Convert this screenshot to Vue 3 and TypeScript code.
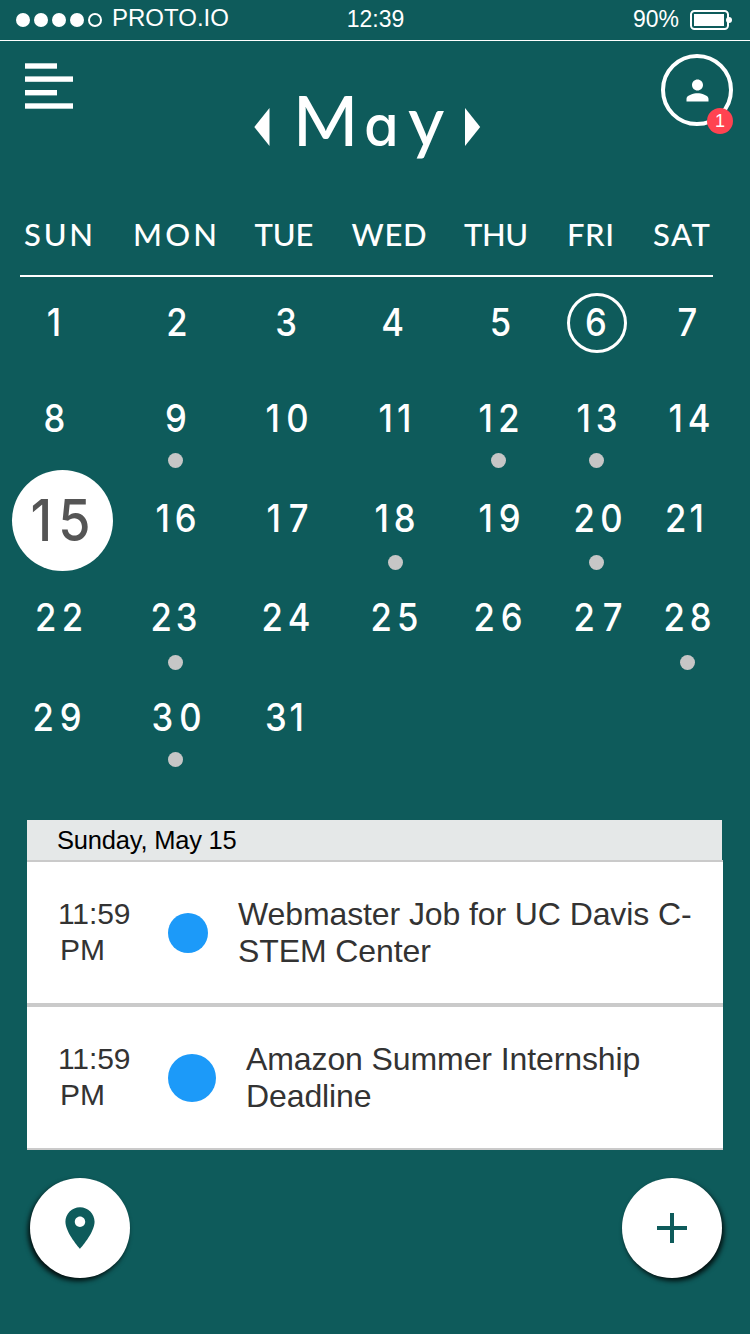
<script setup lang="ts">
interface Column { label: string; width: number; center: number; ink: number }
interface Day { n: number; x: number; w: number; dot?: boolean }
interface Week { height: number; baseline: number; dotY: number; days: Day[] }
interface Entry { title: string; size: number }

const columns: Column[] = [
  { label: 'SUN', width: 116, center: 58.5, ink: 66 },
  { label: 'MON', width: 118, center: 175, ink: 81 },
  { label: 'TUE', width: 106, center: 284, ink: 56 },
  { label: 'WED', width: 110, center: 389, ink: 72 },
  { label: 'THU', width: 96, center: 496, ink: 61 },
  { label: 'FRI', width: 102, center: 590.5, ink: 44 },
  { label: 'SAT', width: 102, center: 681.5, ink: 54 }
]
const starts = columns.map((_, i) => columns.slice(0, i).reduce((sum, c) => sum + c.width, 0))

const weeks: Week[] = [
  { height: 93, baseline: 59, dotY: 0, days: [
    { n: 1, x: 54, w: 12 }, { n: 2, x: 177, w: 19 }, { n: 3, x: 286, w: 18 }, { n: 4, x: 392.5, w: 20 },
    { n: 5, x: 500.5, w: 19 }, { n: 6, x: 596, w: 18 }, { n: 7, x: 687.5, w: 20 }] },
  { height: 100, baseline: 62, dotY: 90.5, days: [
    { n: 8, x: 54.5, w: 17 }, { n: 9, x: 176, w: 18, dot: true }, { n: 10, x: 287, w: 40 }, { n: 11, x: 395, w: 30 },
    { n: 12, x: 499, w: 38, dot: true }, { n: 13, x: 597, w: 38, dot: true }, { n: 14, x: 689.5, w: 39 }] },
  { height: 101, baseline: 62, dotY: 92.5, days: [
    { n: 15, x: 60.5, w: 57 }, { n: 16, x: 176, w: 38 }, { n: 17, x: 287.5, w: 39 }, { n: 18, x: 395, w: 38, dot: true },
    { n: 19, x: 499.5, w: 39 }, { n: 20, x: 598, w: 46, dot: true }, { n: 21, x: 684.5, w: 36 }] },
  { height: 99, baseline: 60, dotY: 91.5, days: [
    { n: 22, x: 59, w: 45 }, { n: 23, x: 174, w: 44, dot: true }, { n: 24, x: 286, w: 46 }, { n: 25, x: 394.5, w: 45 },
    { n: 26, x: 498, w: 46 }, { n: 27, x: 598, w: 46 }, { n: 28, x: 687.5, w: 45, dot: true }] },
  { height: 110, baseline: 61, dotY: 89.5, days: [
    { n: 29, x: 57, w: 46 }, { n: 30, x: 176.5, w: 47, dot: true }, { n: 31, x: 284.5, w: 36 }] }
]

const dotCenters = [58, 175.5, 287, 395.5, 498.5, 596.5, 687.5]
const narrow = 0.9
const entries: Entry[] = [
  { title: 'Webmaster Job for UC Davis C-STEM Center', size: 40 },
  { title: 'Amazon Summer Internship Deadline', size: 48 }
]
</script>

<template>
  <main class="screen">
    <header class="status">
      <div class="carrier">
        <svg width="90" height="16" viewBox="0 0 90 16">
          <circle v-for="i in 4" :key="i" :cx="i * 18 - 10" cy="8" r="7" fill="#fff" />
          <circle cx="80" cy="8" r="6" fill="none" stroke="#fff" stroke-width="2" />
        </svg>
        <span class="carrier-name">PROTO.IO</span>
      </div>
      <span class="clock">12:39</span>
      <div class="power">
        <span>90%</span>
        <svg width="44" height="22" viewBox="0 0 44 22">
          <rect x="2" y="2" width="37" height="18" rx="3.5" fill="none" stroke="#fff" stroke-width="2" />
          <rect x="5" y="5" width="30" height="12" fill="#fff" />
          <ellipse cx="40" cy="11" rx="3" ry="3" fill="#fff" />
        </svg>
      </div>
    </header>

    <section class="top">
      <svg class="menu" width="48" height="46" viewBox="0 0 48 46" fill="#fff">
        <rect x="0" y="0.3" width="32" height="5.4" />
        <rect x="0" y="13.4" width="48" height="5.4" />
        <rect x="0" y="27" width="32" height="5.4" />
        <rect x="0" y="40.3" width="48" height="5.4" />
      </svg>
      <div class="month">
        <svg width="16" height="38" viewBox="0 0 16 38"><path d="M15.5 0V38L0.3 19Z" fill="#fff" /></svg>
        <svg class="month-name" width="167" height="90" viewBox="0 0 167 90">
          <text y="64"><tspan x="9" class="cap">M</tspan><tspan x="80" class="round">a</tspan><tspan x="124" class="cap">y</tspan></text>
        </svg>
        <svg width="16" height="38" viewBox="0 0 16 38"><path d="M0 0V38L15.2 19Z" fill="#fff" /></svg>
      </div>
      <div class="avatar">
        <svg width="33" height="33" viewBox="0 0 24 24" fill="#fff">
          <path d="M12 12c2.210 0 4-1.790 4-4s-1.790-4-4-4-4 1.790-4 4 1.790 4 4 4zm0 2c-2.670 0-8 1.340-8 4v2h16v-2c0-2.660-5.330-4-8-4z" />
        </svg>
        <span class="badge">1</span>
      </div>
    </section>

    <section class="calendar">
      <div class="weekdays">
        <svg v-for="(c, i) in columns" :key="c.label" :width="c.width" height="60">
          <text class="weekday" :x="c.center - starts[i]" y="30.500" text-anchor="middle" :textLength="c.ink + 3" lengthAdjust="spacing">{{ c.label }}</text>
        </svg>
      </div>
      <div class="rule"></div>
      <div v-for="(week, wi) in weeks" :key="wi" class="week">
        <svg v-for="(d, i) in week.days" :key="d.n" :width="columns[i].width" :height="week.height">
          <circle v-if="d.n === 15" cx="62.5" cy="50.5" r="50.5" fill="#fff" />
          <circle v-if="d.n === 6" :cx="597 - starts[i]" cy="46" r="28.500" fill="none" stroke="#fff" stroke-width="3" />
          <g :transform="`translate(${d.x - starts[i]} ${d.n === 15 ? 71 : week.baseline}) scale(${narrow} 1)`">
            <text v-if="d.n < 10" class="number" text-anchor="middle">{{ d.n }}</text>
            <text v-else :class="d.n === 15 ? 'today' : 'number'" text-anchor="middle" :textLength="(d.w + 3) / narrow" lengthAdjust="spacing">{{ d.n }}</text>
          </g>
          <circle v-if="d.dot" :cx="dotCenters[i] - starts[i]" :cy="week.dotY" r="7.500" fill="#c6c6c6" />
        </svg>
      </div>
    </section>

    <section class="agenda">
      <h2>Sunday, May 15</h2>
      <article v-for="e in entries" :key="e.title">
        <div class="time">11:59<br /><span>PM</span></div>
        <svg :width="e.size" :height="e.size"><circle :cx="e.size / 2" :cy="e.size / 2" :r="e.size / 2" fill="#1c9af9" /></svg>
        <p>{{ e.title }}</p>
      </article>
    </section>

    <footer class="actions">
      <button class="fab place" aria-label="Places">
        <svg width="50" height="50" viewBox="0 0 24 24" fill="#0e5b5b">
          <path d="M12 2C8.130 2 5 5.130 5 9c0 5.250 7 13 7 13s7-7.750 7-13c0-3.870-3.130-7-7-7zm0 9.500c-1.380 0-2.500-1.120-2.500-2.500s1.120-2.500 2.500-2.500 2.500 1.120 2.500 2.500-1.120 2.500-2.500 2.500z" />
        </svg>
      </button>
      <button class="fab add" aria-label="Add event">
        <svg width="30" height="30" viewBox="0 0 30 30" fill="#0e5b5b"><path d="M13 0h4v13h13v4H17v13h-4V17H0v-4h13z" /></svg>
      </button>
    </footer>
  </main>
</template>

<style>
html, body { margin: 0; background: #0e5b5b; }
</style>

<style scoped>
.screen {
  width: 750px;
  height: 1334px;
  overflow: hidden;
  background: #0e5b5b;
  color: #fff;
  font-family: "Liberation Sans", Arial, sans-serif;
}
svg { display: block; flex: none; overflow: visible; }
.status {
  display: grid;
  grid-template-columns: 1fr 60px 1fr;
  align-items: center;
  height: 40px;
  border-bottom: 1px solid #fff;
  font-size: 23px;
  line-height: 26px;
}
.carrier { display: flex; align-items: center; padding-left: 15px; }
.carrier-name { margin: -4px 0 0 7px; font-size: 24px; }
.clock { text-align: center; margin: -2px 0 0 1px; }
.power { display: flex; justify-content: flex-end; align-items: center; gap: 10px; padding-right: 17px; }
.power span { margin-top: -2px; }
.top { display: flex; height: 165px; }
.menu { margin: 22px 0 0 25px; }
.month { display: flex; align-items: center; height: 90px; margin: 41px 0 0 181px; }
.month-name { margin: 0 14px; }
.cap { font-family: Lato, sans-serif; font-size: 70px; font-weight: 500; fill: #fff; }
.round { font-family: Inter, sans-serif; font-size: 56px; font-weight: 500; font-feature-settings: "cv11" 1; fill: #fff; }
.avatar {
  position: relative;
  display: flex;
  align-items: center;
  justify-content: center;
  box-sizing: border-box;
  width: 72px;
  height: 72px;
  margin: 13px 17px 0 auto;
  border: 4px solid #fff;
  border-radius: 50%;
}
.badge {
  position: absolute;
  right: -4px;
  bottom: -12px;
  width: 26px;
  height: 26px;
  border-radius: 50%;
  background: #ff4351;
  font-size: 18px;
  line-height: 26px;
  text-align: center;
}
.weekdays, .week { display: flex; }
.weekdays { margin-top: 9px; }
.weekday { font: 500 31px Lato, sans-serif; fill: #fff; }
.rule { width: 693px; height: 2px; margin-left: 20px; background: #fff; }
.number { font: 500 38.500px Inter, sans-serif; fill: #fff; }
.today { font: 500 58px Inter, sans-serif; fill: #555; }
.agenda { width: 696px; margin: 40px 0 0 27px; color: #333; }
.agenda h2 {
  box-sizing: border-box;
  width: 695px;
  height: 40px;
  margin: 0;
  padding-left: 30px;
  background: #e5e8e8;
  color: #000;
  font-size: 25.500px;
  font-weight: 400;
  line-height: 40px;
  letter-spacing: -0.2px;
}
.agenda article {
  display: flex;
  align-items: center;
  height: 141px;
  border-top: 2px solid #cacaca;
  border-bottom: 2px solid #cacaca;
  background: #fff;
}
.time { width: 80px; margin: -2px 30px 0 31px; font-size: 30px; line-height: 36px; letter-spacing: -0.1px; }
.time span { margin-left: 2px; }
.agenda p { width: 465px; margin: 0 0 0 30px; font-size: 32px; line-height: 37px; letter-spacing: -0.1px; }
.actions { display: flex; justify-content: space-between; margin: 28px 28px 0 30px; }
.fab {
  display: flex;
  align-items: center;
  justify-content: center;
  width: 100px;
  height: 100px;
  padding: 0;
  border: 0;
  border-radius: 50%;
  background: #fff;
}
.place { box-shadow: -2px 3px 5px rgba(0, 0, 0, 0.85); }
.add { box-shadow: 2px 3px 5px rgba(0, 0, 0, 0.85); }
</style>
